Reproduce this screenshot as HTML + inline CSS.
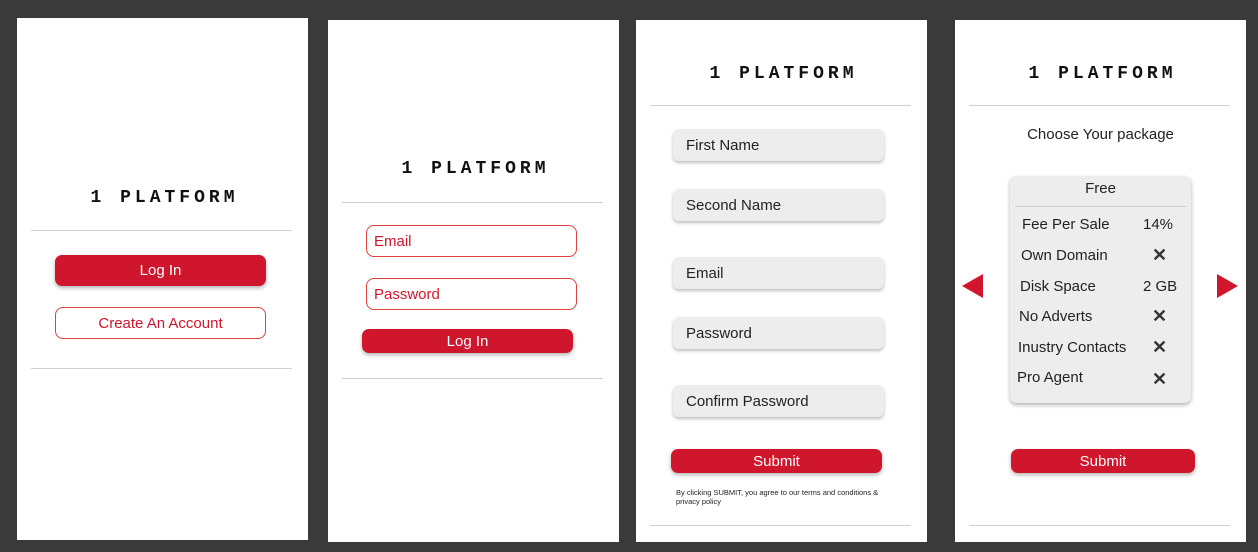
<!DOCTYPE html><html><head><style>
body{margin:0;width:1258px;height:552px;background:#3a3a3a;position:relative;overflow:hidden;font-family:"Liberation Sans",sans-serif}
.p{position:absolute;background:#fff}
.a{position:absolute}
.logo{position:absolute;font-family:"Liberation Mono",monospace;font-weight:bold;font-size:18px;letter-spacing:4px;color:#111;text-align:center;width:291px;left:2px}
.hr{position:absolute;height:1px;background:#d0d0d0}
.btn{position:absolute;background:#d0162c;color:#fff;border-radius:7px;text-align:center;font-size:15px;box-shadow:0 2px 4px rgba(0,0,0,.3)}
.ob{position:absolute;border:1px solid #e04040;color:#d0162c;border-radius:8px;font-size:15px;box-sizing:border-box}
.g{position:absolute;background:#ededed;border-radius:6px;font-size:15px;color:#222;padding-left:13px;box-sizing:border-box;box-shadow:0 2px 3px rgba(0,0,0,.25)}
.r{position:absolute;font-size:15px;color:#222}
.x{position:absolute;font-size:18px;font-weight:bold;color:#333}
</style></head><body>
<div class="p" style="left:17px;top:18px;width:291px;height:522px">
<div class="logo" style="top:170px">1 PLATFORM</div>
<div class="hr" style="left:14px;top:212px;width:261px"></div>
<div class="btn" style="left:38px;top:237px;width:211px;height:31px;line-height:32px">Log In</div>
<div class="ob" style="left:38px;top:289px;width:211px;height:32px;line-height:32px;text-align:center">Create An Account</div>
<div class="hr" style="left:14px;top:350px;width:261px"></div>
</div>
<div class="p" style="left:328px;top:20px;width:291px;height:522px">
<div class="logo" style="top:139px">1 PLATFORM</div>
<div class="hr" style="left:14px;top:182px;width:261px"></div>
<div class="ob" style="left:38px;top:205px;width:211px;height:32px;line-height:32px;padding-left:7px">Email</div>
<div class="ob" style="left:38px;top:258px;width:211px;height:32px;line-height:32px;padding-left:7px">Password</div>
<div class="btn" style="left:34px;top:309px;width:211px;height:24px;line-height:26px">Log In</div>
<div class="hr" style="left:14px;top:358px;width:261px"></div>
</div>
<div class="p" style="left:636px;top:20px;width:291px;height:522px">
<div class="logo" style="top:44px">1 PLATFORM</div>
<div class="hr" style="left:14px;top:85px;width:261px"></div>
<div class="g" style="left:37px;top:109px;width:211px;height:32px;line-height:34px">First Name</div>
<div class="g" style="left:37px;top:169px;width:211px;height:32px;line-height:34px">Second Name</div>
<div class="g" style="left:37px;top:237px;width:211px;height:32px;line-height:34px">Email</div>
<div class="g" style="left:37px;top:297px;width:211px;height:32px;line-height:34px">Password</div>
<div class="g" style="left:37px;top:365px;width:211px;height:32px;line-height:34px">Confirm Password</div>
<div class="btn" style="left:35px;top:429px;width:211px;height:24px;line-height:26px">Submit</div>
<div class="a" style="left:40px;top:468px;font-size:7.5px;line-height:9px;color:#222;width:215px">By clicking SUBMIT, you agree to our terms and conditions &amp; privacy policy</div>
<div class="hr" style="left:14px;top:505px;width:261px"></div>
</div>
<div class="p" style="left:955px;top:20px;width:291px;height:522px">
<div class="logo" style="top:44px">1 PLATFORM</div>
<div class="hr" style="left:14px;top:85px;width:261px"></div>
<div class="a" style="left:0;width:291px;text-align:center;top:106px;font-size:15px;color:#222">Choose Your package</div>
<div class="a" style="left:55px;top:156px;width:181px;height:227px;background:#ededed;border-radius:7px;box-shadow:0 2px 4px rgba(0,0,0,.3)">
<div class="a" style="left:0;width:181px;text-align:center;top:4px;font-size:15px;color:#222">Free</div>
<div class="a" style="left:5px;top:30px;width:171px;height:1px;background:#ccc"></div>
</div>
<div class="r" style="left:67px;top:196px">Fee Per Sale</div><div class="r" style="left:188px;top:196px">14%</div>
<div class="r" style="left:66px;top:227px">Own Domain</div><div class="x" style="left:197px;top:225px">✕</div>
<div class="r" style="left:65px;top:258px">Disk Space</div><div class="r" style="left:188px;top:258px">2 GB</div>
<div class="r" style="left:64px;top:288px">No Adverts</div><div class="x" style="left:197px;top:286px">✕</div>
<div class="r" style="left:63px;top:319px">Inustry Contacts</div><div class="x" style="left:197px;top:317px">✕</div>
<div class="r" style="left:62px;top:349px">Pro Agent</div><div class="x" style="left:197px;top:349px">✕</div>
<div class="a" style="left:7px;top:254px;width:0;height:0;border-top:12px solid transparent;border-bottom:12px solid transparent;border-right:21px solid #d0162c"></div>
<div class="a" style="left:262px;top:254px;width:0;height:0;border-top:12px solid transparent;border-bottom:12px solid transparent;border-left:21px solid #d0162c"></div>
<div class="btn" style="left:56px;top:429px;width:184px;height:24px;line-height:26px">Submit</div>
<div class="hr" style="left:14px;top:505px;width:261px"></div>
</div>
</body></html>
